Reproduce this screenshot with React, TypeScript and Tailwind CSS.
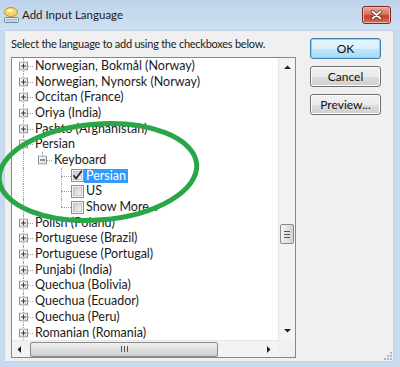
type Kind = 'pipe' | 'tee' | 'elbow' | 'blank';
type Row = {
  label: string;
  cells: [Kind, ('+' | '-')?][];
  check?: boolean;
  selected?: boolean;
};

const rows: Row[] = [
  { label: 'Norwegian, Bokmål (Norway)', cells: [['tee', '+']] },
  { label: 'Norwegian, Nynorsk (Norway)', cells: [['tee', '+']] },
  { label: 'Occitan (France)', cells: [['tee', '+']] },
  { label: 'Oriya (India)', cells: [['tee', '+']] },
  { label: 'Pashto (Afghanistan)', cells: [['tee', '+']] },
  { label: 'Persian', cells: [['tee', '-']] },
  { label: 'Keyboard', cells: [['pipe'], ['elbow', '-']] },
  { label: 'Persian', cells: [['pipe'], ['blank'], ['tee']], check: true, selected: true },
  { label: 'US', cells: [['pipe'], ['blank'], ['tee']], check: false },
  { label: 'Show More...', cells: [['pipe'], ['blank'], ['elbow']], check: false },
  { label: 'Polish (Poland)', cells: [['tee', '+']] },
  { label: 'Portuguese (Brazil)', cells: [['tee', '+']] },
  { label: 'Portuguese (Portugal)', cells: [['tee', '+']] },
  { label: 'Punjabi (India)', cells: [['tee', '+']] },
  { label: 'Quechua (Bolivia)', cells: [['tee', '+']] },
  { label: 'Quechua (Ecuador)', cells: [['tee', '+']] },
  { label: 'Quechua (Peru)', cells: [['tee', '+']] },
  { label: 'Romanian (Romania)', cells: [['tee', '+']] },
];

function ExpBox({ sign }: { sign: '+' | '-' }) {
  return (
    <svg width="9" height="9" viewBox="0 0 9 9" className="absolute left-[5px] top-1/2 -translate-y-1/2">
      <defs>
        <linearGradient id="expg" x1="0" y1="0" x2="1" y2="1">
          <stop offset="0" stopColor="#ffffff" />
          <stop offset="1" stopColor="#d8d8d8" />
        </linearGradient>
      </defs>
      <rect x="0.5" y="0.5" width="8" height="8" fill="url(#expg)" stroke="#8f8f8f" />
      <path d="M2 4.5h5" stroke="#3a3a3a" />
      {sign === '+' && <path d="M4.5 2v5" stroke="#3a3a3a" />}
    </svg>
  );
}

function Cell({ kind, box }: { kind: Kind; box?: '+' | '-' }) {
  return (
    <div className="relative h-full w-[19px] shrink-0">
      {(kind === 'pipe' || kind === 'tee') && (
        <div className="absolute left-[9px] top-0 h-full border-l border-dotted border-[#a0a0a0]" />
      )}
      {kind === 'elbow' && (
        <div className="absolute left-[9px] top-0 h-1/2 border-l border-dotted border-[#a0a0a0]" />
      )}
      {(kind === 'tee' || kind === 'elbow') && (
        <div className="absolute left-[9px] top-1/2 w-[10px] border-t border-dotted border-[#a0a0a0]" />
      )}
      {box && <ExpBox sign={box} />}
    </div>
  );
}

function Checkbox({ checked }: { checked: boolean }) {
  return (
    <svg width="13" height="13" viewBox="0 0 13 13" className="shrink-0">
      <defs>
        <linearGradient id="cbg" x1="0" y1="0" x2="1" y2="1">
          <stop offset="0" stopColor="#cbcbcb" />
          <stop offset="1" stopColor="#f6f6f6" />
        </linearGradient>
      </defs>
      <rect x="0.5" y="0.5" width="12" height="12" fill="#f4f4f4" stroke="#8e8f8f" />
      <rect x="2.5" y="2.5" width="8" height="8" fill="url(#cbg)" stroke="#c4c4c4" />
      {checked && <path d="M2.5 6.2l2.6 3.3L10.8 1.8" stroke="#1d2740" strokeWidth="1.7" fill="none" />}
    </svg>
  );
}

function Arrow({ dir }: { dir: 'up' | 'down' | 'left' | 'right' }) {
  const d = {
    up: 'M1 5h7L4.5 1.5z',
    down: 'M1 2h7L4.5 5.5z',
    left: 'M5 1v7L1.5 4.5z',
    right: 'M2 1v7l3.5-3.5z',
  }[dir];
  return (
    <svg width="9" height="9" viewBox="0 0 9 9">
      <path d={d} fill="#222" />
    </svg>
  );
}

function Btn({ label, primary }: { label: string; primary?: boolean }) {
  return (
    <div
      className={
        primary
          ? 'flex h-[21px] w-[71px] items-center justify-center rounded-[3px] border border-[#3c7fb1] bg-[linear-gradient(to_bottom,#eaf6fd_0%,#d9f0fc_50%,#bee6fd_51%,#a7d9f5_100%)] text-[12px] text-[#111] shadow-[inset_0_0_0_1px_#8fd3f8]'
          : 'flex h-[21px] w-[71px] items-center justify-center rounded-[3px] border border-[#707070] bg-[linear-gradient(to_bottom,#f2f2f2_0%,#ebebeb_50%,#dddddd_51%,#cfcfcf_100%)] text-[12px] text-[#111] shadow-[inset_0_0_0_1px_#fcfcfc]'
      }
    >
      {label}
    </div>
  );
}

export default function App() {
  return (
    <div className="relative flex h-[367px] w-[400px] flex-col overflow-hidden bg-[#c7daef] font-['Lato','Open_Sans',sans-serif]">
      {/* title bar */}
      <div className="flex h-[30px] items-center bg-[linear-gradient(to_bottom,#bdd3eb,#cfe0f2)] pl-[3px] pr-[9px]">
        <svg width="17" height="18" viewBox="0 0 17 18" className="shrink-0">
          <ellipse cx="8" cy="6" rx="6.5" ry="4.5" fill="#f2d56b" stroke="#b8952c" />
          <ellipse cx="7" cy="4.5" rx="3" ry="1.6" fill="#fff4c0" />
          <rect x="1.5" y="11.5" width="14" height="5" rx="1" fill="#dfe7ef" stroke="#6f87a3" />
          <path d="M3 13.5h11M3 15h11" stroke="#9fb2c8" strokeWidth="0.8" />
        </svg>
        <span className="ml-[2px] text-[11.5px] text-[#1b1b1b]">Add Input Language</span>
        <div className="ml-auto flex h-[18px] w-[29px] items-center justify-center rounded-[3px] border border-[#7a2a22] bg-[linear-gradient(to_bottom,#e9a99b_0%,#d7735f_45%,#c4402c_55%,#d4705a_100%)] shadow-[inset_0_0_0_1px_#f0b8aa]">
          <svg width="11" height="10" viewBox="0 0 11 10">
            <path d="M1.5 1.5l8 7M9.5 1.5l-8 7" stroke="#5a1a12" strokeWidth="3" strokeLinecap="round" />
            <path d="M1.5 1.5l8 7M9.5 1.5l-8 7" stroke="#ffffff" strokeWidth="1.8" strokeLinecap="round" />
          </svg>
        </div>
      </div>

      {/* client area */}
      <div className="relative mb-[5px] ml-[4px] mr-[6px] flex flex-1 border border-[#c3d4e6] bg-[#f0f0f0] pl-[6px] pt-[6px]">
        <div className="flex w-[285px] flex-col">
          <div className="h-[20px] whitespace-nowrap text-[11px] leading-[14px] tracking-[-0.25px] text-[#1b1b1b]">
            Select the language to add using the checkboxes below.
          </div>
          <div className="flex h-[301px] w-[285px] flex-col border border-[#828790] bg-white">
            <div className="flex min-h-0 flex-1">
              <div className="flex-1 overflow-hidden pl-[2px] text-[12.5px] text-[#1b1b1b]">
                {rows.map((r, i) => (
                  <div key={i} className="flex h-[15.7px] items-center">
                    {r.cells.map(([k, b], j) => (
                      <Cell key={j} kind={k} box={b} />
                    ))}
                    {r.check !== undefined && <Checkbox checked={r.check} />}
                    <span
                      className={
                        r.selected
                          ? 'h-[14px] whitespace-nowrap bg-[#3399ff] px-[2px] leading-[14px] text-white'
                          : 'h-[14px] whitespace-nowrap px-[2px] leading-[14px]'
                      }
                    >
                      {r.label}
                    </span>
                  </div>
                ))}
              </div>
              {/* vertical scrollbar */}
              <div className="flex w-[17px] shrink-0 flex-col border-l border-[#e6e6e6] bg-[#f3f3f3]">
                <div className="flex h-[17px] items-center justify-center pt-[3px]">
                  <Arrow dir="up" />
                </div>
                <div className="flex-1">
                  <div className="ml-[1px] mt-[149px] flex h-[20px] w-[14px] flex-col items-center justify-center gap-[2px] rounded-[2px] border border-[#8a8a8a] bg-[linear-gradient(to_right,#f3f3f3,#e2e2e2_50%,#d2d2d2)]">
                    <div className="h-px w-[6px] bg-[#555]" />
                    <div className="h-px w-[6px] bg-[#555]" />
                    <div className="h-px w-[6px] bg-[#555]" />
                  </div>
                </div>
                <div className="flex h-[17px] items-center justify-center">
                  <Arrow dir="down" />
                </div>
              </div>
            </div>
            {/* horizontal scrollbar */}
            <div className="flex h-[17px] shrink-0">
              <div className="flex flex-1 items-center border-t border-[#e6e6e6] bg-[#f3f3f3]">
                <div className="flex w-[17px] justify-center">
                  <Arrow dir="left" />
                </div>
                <div className="ml-[1px] flex h-[15px] w-[188px] items-center justify-center gap-[2px] rounded-[2px] border border-[#8a8a8a] bg-[linear-gradient(to_bottom,#f0f0f0,#dedede_50%,#cecece)]">
                  <div className="h-[6px] w-px bg-[#555]" />
                  <div className="h-[6px] w-px bg-[#555]" />
                  <div className="h-[6px] w-px bg-[#555]" />
                </div>
                <div className="ml-auto flex w-[17px] justify-center">
                  <Arrow dir="right" />
                </div>
              </div>
              <div className="w-[17px] bg-[#f0f0f0]" />
            </div>
          </div>
        </div>

        <div className="ml-[14px] flex flex-col gap-[7px] pt-px">
          <Btn label="OK" primary />
          <Btn label="Cancel" />
          <Btn label="Preview..." />
        </div>

        {/* size grip */}
        <svg width="9" height="9" viewBox="0 0 9 9" className="absolute bottom-[1px] right-[1px]">
          {[
            [7, 1],
            [7, 4],
            [4, 4],
            [7, 7],
            [4, 7],
            [1, 7],
          ].map(([x, y], i) => (
            <rect key={i} x={x} y={y} width="2" height="2" fill="#b5b5b5" />
          ))}
        </svg>
      </div>

      {/* hand-drawn highlight */}
      <svg width="400" height="367" className="pointer-events-none absolute left-0 top-0">
        <ellipse
          cx="98"
          cy="172"
          rx="99"
          ry="48"
          transform="rotate(-4.5 98 172)"
          fill="none"
          stroke="#2aa646"
          strokeWidth="5"
        />
      </svg>
    </div>
  );
}
